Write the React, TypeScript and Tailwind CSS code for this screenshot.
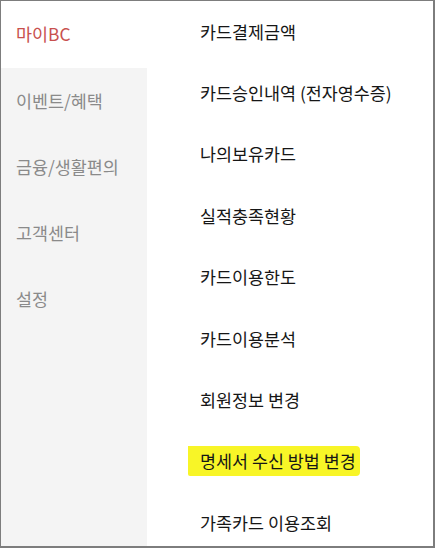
export default function App() {
  const sideItems = ["이벤트/혜택", "금융/생활편의", "고객센터", "설정"];
  const menuItems = [
    "카드결제금액",
    "카드승인내역 (전자영수증)",
    "나의보유카드",
    "실적충족현황",
    "카드이용한도",
    "카드이용분석",
    "회원정보 변경",
    "명세서 수신 방법 변경",
    "가족카드 이용조회",
  ];

  return (
    <div
      className="flex h-[548px] w-[435px] overflow-hidden border-t border-l border-r-2 border-b-2 border-[#7d7d7d] bg-white text-[17.4px]"
      style={{ fontFamily: '"Noto Sans CJK KR", "Noto Sans", sans-serif' }}
    >
      {/* 왼쪽 카테고리 */}
      <div className="flex w-[146px] shrink-0 flex-col">
        <div className="flex h-[67px] shrink-0 items-center pl-[15px] text-[#c8504e]">마이BC</div>
        <div className="flex flex-1 flex-col bg-[#f4f4f4]">
          {sideItems.map((item) => (
            <div key={item} className="flex h-[66px] shrink-0 items-center pl-[15px] text-[#8a8a8a]">
              {item}
            </div>
          ))}
        </div>
      </div>

      {/* 오른쪽 메뉴 */}
      <div className="flex flex-1 flex-col pl-[53px]">
        {menuItems.map((item) => (
          <div key={item} className="flex h-[61.4px] shrink-0 items-center text-[#161616]">
            {item === "명세서 수신 방법 변경" ? (
              <span className="-ml-[12px] rounded-r-[4px] rounded-bl-[2px] bg-[#f8f527] py-[2px] pl-[12px] pr-[4px]">
                {item}
              </span>
            ) : (
              item
            )}
          </div>
        ))}
      </div>
    </div>
  );
}
